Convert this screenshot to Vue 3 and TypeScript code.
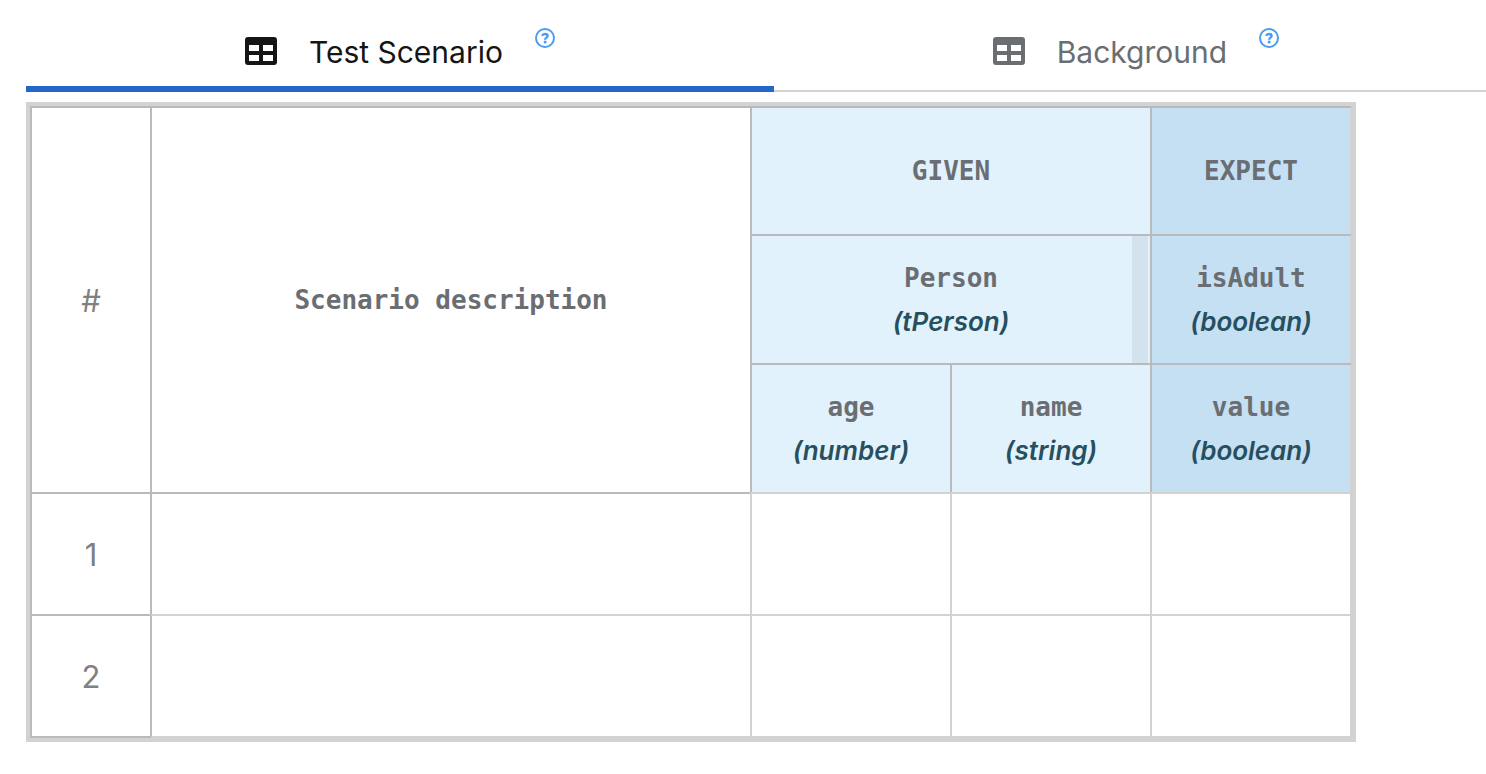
<script setup lang="ts">
import { ref } from 'vue'

interface Tab {
  id: string
  label: string
}

interface HeaderCell {
  name: string
  type?: string
  group: 'given' | 'expect'
  span?: number
  resizing?: boolean
}

const tabs: Tab[] = [
  { id: 'scenario', label: 'Test Scenario' },
  { id: 'background', label: 'Background' },
]
const active = ref<string>('scenario')

const instances: HeaderCell[] = [
  { name: 'Person', type: '(tPerson)', group: 'given', span: 2, resizing: true },
  { name: 'isAdult', type: '(boolean)', group: 'expect' },
]
const fields: HeaderCell[] = [
  { name: 'age', type: '(number)', group: 'given' },
  { name: 'name', type: '(string)', group: 'given' },
  { name: 'value', type: '(boolean)', group: 'expect' },
]
const rows: string[][] = [
  ['', '', '', ''],
  ['', '', '', ''],
]
</script>

<template>
  <main class="editor">
    <div class="tabs" role="tablist">
      <button
        v-for="tab in tabs"
        :key="tab.id"
        type="button"
        role="tab"
        class="tab"
        :class="{ active: active === tab.id }"
        :aria-selected="active === tab.id"
        @click="active = tab.id"
      >
        <svg class="tab-icon" viewBox="0 0 512 448" aria-hidden="true">
          <path
            fill="currentColor"
            fill-rule="evenodd"
            d="M48 0H464Q512 0 512 48V400Q512 448 464 448H48Q0 448 0 400V48Q0 0 48 0ZM64 128V224H224V128ZM288 128V224H448V128ZM64 288V384H224V288ZM288 288V384H448V288Z"
          />
        </svg>
        <span class="tab-label">{{ tab.label }}</span>
        <svg class="help" viewBox="0 0 20 20" aria-hidden="true">
          <circle cx="10" cy="10" r="9" fill="none" stroke="currentColor" stroke-width="2" />
          <path
            d="M7 7.8C7.6 6.5 8.6 6 10 6C11.6 6 12.6 6.8 12.6 8C12.6 9.7 10.1 9.6 10.1 11.8"
            fill="none"
            stroke="currentColor"
            stroke-width="2.4"
          />
          <circle cx="10.1" cy="14" r="1.5" fill="currentColor" />
        </svg>
      </button>
    </div>

    <div class="grid-frame">
      <table class="grid">
        <colgroup>
          <col class="col-index" />
          <col class="col-description" />
          <col class="col-value" />
          <col class="col-value" />
          <col class="col-last" />
        </colgroup>
        <thead>
          <tr class="first">
            <th rowspan="3" scope="col" class="index">#</th>
            <th rowspan="3" scope="col">Scenario description</th>
            <th colspan="2" scope="colgroup" class="given">GIVEN</th>
            <th scope="colgroup" class="expect">EXPECT</th>
          </tr>
          <tr>
            <th
              v-for="cell in instances"
              :key="cell.name"
              :colspan="cell.span ?? 1"
              scope="colgroup"
              :class="cell.group"
            >
              <span class="name">{{ cell.name }}</span>
              <span class="type">{{ cell.type }}</span>
              <span v-if="cell.resizing" class="resizer"></span>
            </th>
          </tr>
          <tr>
            <th v-for="cell in fields" :key="cell.name" scope="col" :class="cell.group">
              <span class="name">{{ cell.name }}</span>
              <span class="type">{{ cell.type }}</span>
            </th>
          </tr>
        </thead>
        <tbody>
          <tr v-for="(row, r) in rows" :key="r">
            <th scope="row" class="index">{{ r + 1 }}</th>
            <td v-for="(value, c) in row" :key="c">{{ value }}</td>
          </tr>
        </tbody>
      </table>
    </div>
  </main>
</template>

<style>
body {
  margin: 0;
  background: #fff;
}
</style>

<style scoped>
.editor {
  --light: #d2d2d2;
  --dark: #b9babe;
  padding-left: 26px;
  overflow: hidden;
  font-family: Inter, "Open Sans", sans-serif;
}

.tabs {
  display: flex;
  height: 92px;
  margin-right: -12px;
  box-shadow: inset 0 -2px var(--light);
}

.tab {
  flex: 1 1 auto;
  display: flex;
  justify-content: center;
  align-items: flex-start;
  padding: 28px 0 0;
  border: 0;
  border-bottom: 6px solid transparent;
  background: none;
  color: #6a6e73;
  font: inherit;
  font-size: 30px;
  line-height: 48px;
  cursor: pointer;
}

.tab.active {
  border-bottom-color: #2566c8;
  color: #151515;
}

.tab-icon {
  width: 32px;
  height: 28px;
  margin: 9px 32px 0 0;
}

.help {
  width: 20px;
  height: 20px;
  margin-left: 32px;
  color: #4b9cf0;
}

.grid-frame {
  width: max-content;
  margin-top: 10px;
  border: 4px solid var(--light);
}

.grid {
  table-layout: fixed;
  width: 1322px;
  border-collapse: separate;
  border-spacing: 0;
}

.col-index {
  width: 120px;
}

.col-description {
  width: 600px;
}

.col-value {
  width: 200px;
}

.col-last {
  width: 202px;
}

th,
td {
  position: relative;
  box-sizing: border-box;
  padding: 0;
  border: 0 solid var(--dark);
  border-width: 2px 0 0 2px;
  text-align: center;
  vertical-align: middle;
}

thead tr {
  height: 129px;
}

thead tr.first {
  height: 128px;
}

tbody tr {
  height: 122px;
}

tbody tr:last-child {
  height: 124px;
}

thead th {
  color: #6a6e73;
  font: bold 26px/43px "DejaVu Sans Mono", monospace;
}

th.index {
  color: #808080;
  font: 400 31px/43px Inter, "Open Sans", sans-serif;
}

td {
  border-color: var(--light);
}

td:nth-child(2) {
  border-left-color: var(--dark);
}

tbody tr:first-child td:nth-child(2) {
  border-top-color: var(--dark);
}

tr > .expect,
td:last-child {
  border-right: 2px solid var(--light);
}

tbody tr:last-child > * {
  border-bottom-width: 2px;
}

.given {
  background: #e1f2fd;
}

.expect {
  background: #c5e0f3;
}

.given,
.expect {
  background-clip: padding-box;
}

.name,
.type {
  display: block;
}

.type {
  color: #274f5e;
  font: italic 600 26px/43px Inter, "Open Sans", sans-serif;
}

.resizer {
  position: absolute;
  top: 0;
  right: 2px;
  bottom: 0;
  width: 16px;
  background: #d2e3ed;
  cursor: col-resize;
}
</style>
